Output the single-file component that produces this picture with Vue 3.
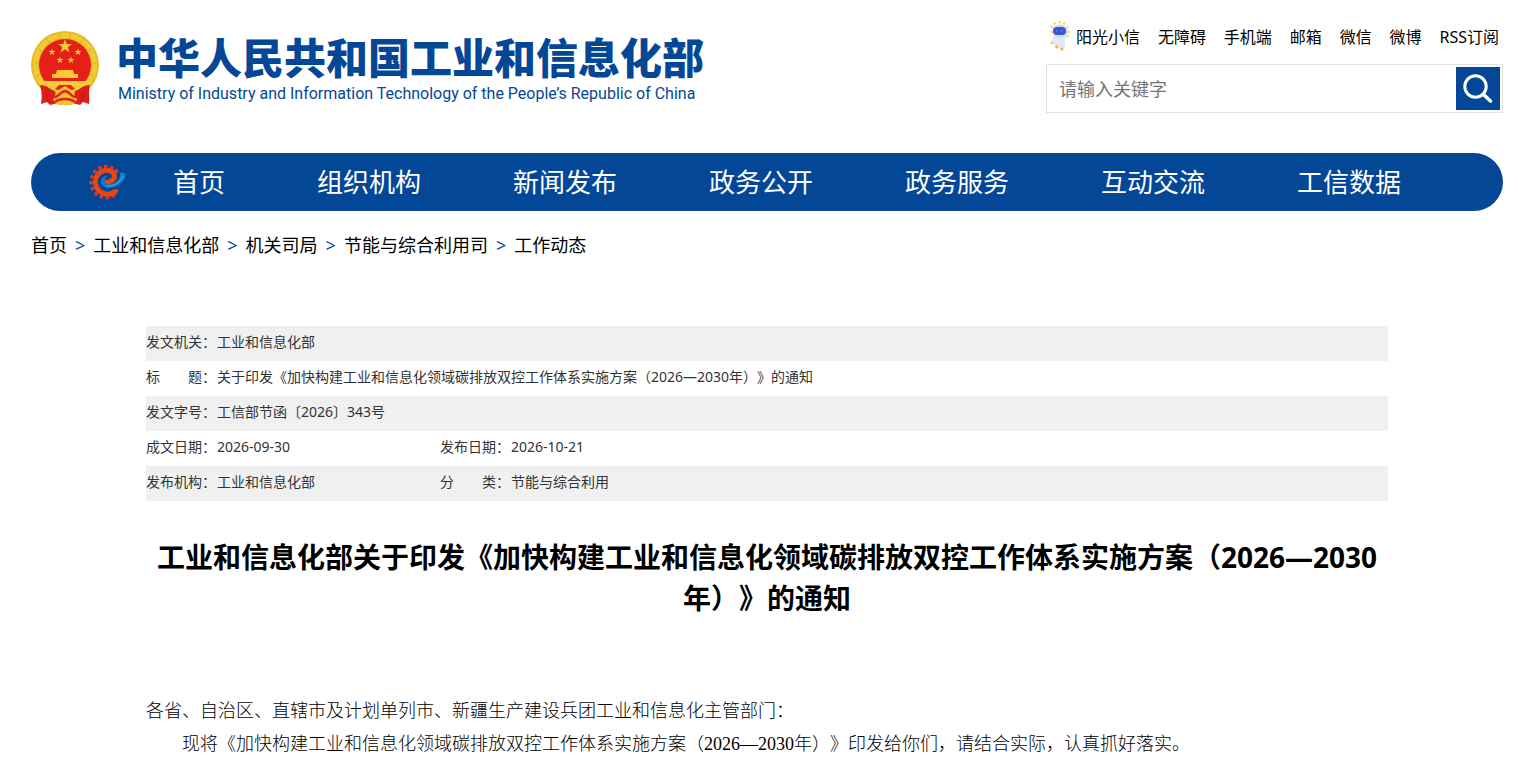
<script setup>
const topLinks = ['无障碍', '手机端', '邮箱', '微信', '微博', 'RSS订阅']
const navItems = ['首页', '组织机构', '新闻发布', '政务公开', '政务服务', '互动交流', '工信数据']
const crumbs = ['首页', '工业和信息化部', '机关司局', '节能与综合利用司', '工作动态']
const gearTeeth = Array.from({ length: 12 }, (_, i) => {
  const a = ((45 + i * 23) * Math.PI) / 180
  return { x: 17 + 15 * Math.cos(a), y: 18 - 15.5 * Math.sin(a) }
})
</script>

<template>
  <div class="page">
    <header class="header">
      <a href="#" class="brand">
        <svg class="emblem" viewBox="0 0 68 75" aria-hidden="true">
          <circle cx="34" cy="34" r="34" fill="#e6bb25" />
          <circle cx="34" cy="34" r="29.5" fill="none" stroke="#f0cb35" stroke-width="5" />
          <path d="M8 18l5 4M16 8l4 6M28 3l2 6M40 3l-2 6M52 8l-4 6M60 18l-5 4M3 32h6M65 32h-6M5 45l6-2M63 45l-6-2" stroke="#e3b726" stroke-width="1.5" />
          <circle cx="34" cy="34" r="26" fill="#e71f19" />
          <g fill="#f5cc35">
            <path d="M34 8l1.700 5.100h5.300l-4.200 3.200 1.600 5.200-4.400-3.200-4.400 3.200 1.600-5.200-4.200-3.200h5.300z" />
            <path id="star" d="M21 17.500l.9 2.500h2.600l-2.100 1.600.8 2.600-2.200-1.600-2.200 1.600.8-2.600-2.100-1.600h2.600z" />
            <use href="#star" x="26" />
            <use href="#star" x="8" y="8" />
            <use href="#star" x="19" y="8" />
            <path d="M26 39h16l1 4h4v4H21v-4h4z" />
            <path d="M13 50h42l-3 6-7 3-5-5H28l-5 5-7-3z" />
          </g>
          <path d="M9 54c7 0 9 4 15 6l3 12-8 2-3-3-6 2c1-6 1-13-1-19zM59 54c-7 0-9 4-15 6l-3 12 8 2 3-3 6 2c1-6-1-13 1-19z" fill="#dc1f19" />
          <path d="M26 60l8-5 8 5 4 9-5 5H27l-5-5z" fill="#f0c42c" />
          <path d="M20 65c7 4 9-5 14-5s7 9 14 5M24 71c5-4 15-4 20 0" fill="none" stroke="#dc241a" stroke-width="2.5" />
          <path d="M15 61l2 10M53 61l-2 10" stroke="#b81813" />
        </svg>
        <span class="brand-text">
          <span class="brand-cn">中华人民共和国工业和信息化部</span>
          <span class="brand-en">Ministry of Industry and Information Technology of the People’s Republic of China</span>
        </span>
      </a>

      <div class="tools">
        <div class="top-links">
          <a href="#" class="mascot-link">
            <svg class="mascot" viewBox="0 0 20 30" aria-hidden="true">
              <g fill="#f8d35a">
                <circle cx="5" cy="2.500" r="1.300" /><circle cx="9.500" cy="1.300" r="1.300" /><circle cx="14" cy="2.500" r="1.300" />
                <circle cx="2" cy="6" r="1.200" /><circle cx="17.500" cy="6" r="1.200" /><circle cx="1.500" cy="11" r="1.200" />
                <circle cx="18.500" cy="11" r="1.200" /><circle cx="18" cy="15" r="1.200" />
              </g>
              <path d="M4 14h11l2-1 1 1-3 5v6l-2 4h-3l-1-4-2 3H5l-1-6-2 1-1-2z" fill="#e0eaf6" />
              <ellipse cx="10" cy="10" rx="7.500" ry="6.500" fill="#cad9f1" />
              <rect x="3" y="6" width="13" height="8" rx="4" fill="#3a58d0" />
              <path d="M6 10h1M11 10h1" stroke="#5f86eb" stroke-width="2" />
              <circle cx="2" cy="22" r="1.300" fill="#f3c660" /><circle cx="7" cy="26" r="1.600" fill="#f2b644" /><circle cx="12" cy="28" r="1.600" fill="#f2b644" />
            </svg>
            阳光小信
          </a>
          <a v-for="link in topLinks" :key="link" href="#">{{ link }}</a>
        </div>
        <form class="search" @submit.prevent>
          <input type="text" placeholder="请输入关键字" aria-label="请输入关键字" />
          <button type="submit" aria-label="搜索">
            <svg viewBox="0 0 44 43" aria-hidden="true">
              <circle cx="19.500" cy="19.500" r="10.700" fill="none" stroke="#fff" stroke-width="3" />
              <path d="M27.500 27.500l7 6.500" stroke="#fff" stroke-width="3.600" stroke-linecap="round" />
            </svg>
          </button>
        </form>
      </div>
    </header>

    <nav class="nav">
      <svg class="gear" viewBox="0 0 37 36" aria-hidden="true">
        <circle v-for="(t, i) in gearTeeth" :key="i" :cx="t.x" :cy="t.y" r="2" fill="#d23c28" />
        <path d="M27 27C20 33 8 30 6.500 19.500 5.500 11 13 5 20 6.500c7 1.500 7 8 2 10.500-3 2-6 2-8 0" fill="none" stroke="#ea4513" stroke-width="5" />
        <path d="M27 25l3 1-4 5-3-3z" fill="#ea4513" />
        <path d="M12 18c0-4 4-7 8-6-5 1-6 6-1 8 7 1 13-4 12-11 5-2 7 2 4 7-6 8-21 12-23 2z" fill="#1878c8" />
        <path d="M17 22c7 1 14-3 17-10" fill="none" stroke="#37a0df" stroke-width="1.200" />
      </svg>
      <a v-for="item in navItems" :key="item" href="#">{{ item }}</a>
    </nav>

    <div class="crumbs">
      <template v-for="(crumb, i) in crumbs" :key="crumb">
        <span v-if="i" class="sep">&gt;</span>
        <a href="#">{{ crumb }}</a>
      </template>
    </div>

    <main class="article">
      <table class="meta">
        <tbody>
          <tr><th scope="row">发文机关：</th><td colspan="3">工业和信息化部</td></tr>
          <tr><th scope="row">标　　题：</th><td colspan="3">关于印发《加快构建工业和信息化领域碳排放双控工作体系实施方案（2026—2030年）》的通知</td></tr>
          <tr><th scope="row">发文字号：</th><td colspan="3">工信部节函〔2026〕343号</td></tr>
          <tr><th scope="row">成文日期：</th><td class="first">2026-09-30</td><th scope="row">发布日期：</th><td>2026-10-21</td></tr>
          <tr><th scope="row">发布机构：</th><td class="first">工业和信息化部</td><th scope="row">分　　类：</th><td>节能与综合利用</td></tr>
        </tbody>
      </table>
      <h1>工业和信息化部关于印发《加快构建工业和信息化领域碳排放双控工作体系实施方案（2026—2030年）》的通知</h1>
      <div class="body">
        <p>各省、自治区、直辖市及计划单列市、新疆生产建设兵团工业和信息化主管部门：</p>
        <p class="indent">现将《加快构建工业和信息化领域碳排放双控工作体系实施方案（2026—2030年）》印发给你们，请结合实际，认真抓好落实。</p>
      </div>
    </main>
  </div>
</template>

<style>
body {
  margin: 0;
  background: #fff;
}
</style>

<style scoped>
.page {
  padding: 20px 15px 8px 31px;
  font-family: "Noto Sans", "Noto Sans CJK SC", sans-serif;
  color: #000;
  text-spacing-trim: space-all;
}
a {
  color: inherit;
  text-decoration: none;
}
.header {
  display: flex;
  justify-content: space-between;
  align-items: flex-start;
}
.brand {
  display: flex;
  gap: 17px;
  padding-top: 11px;
  color: #054797;
}
.emblem {
  width: 68px;
  height: 75px;
}
.brand-text {
  display: flex;
  flex-direction: column;
  white-space: nowrap;
}
.brand-cn {
  padding-top: 4px;
  font-family: "Liberation Sans", "Noto Sans CJK SC", sans-serif;
  font-size: 42px;
  font-weight: 900;
  line-height: 50px;
}
.brand-en {
  padding-left: 2px;
  font-family: Roboto, sans-serif;
  font-size: 16px;
  line-height: 18px;
}
.tools {
  width: 457px;
}
.top-links {
  display: flex;
  justify-content: space-between;
  align-items: center;
  height: 32px;
  padding: 0 4px;
  font-size: 16px;
}
.mascot-link {
  display: flex;
  align-items: center;
  gap: 6px;
}
.mascot {
  width: 20px;
  height: 30px;
}
.search {
  display: flex;
  box-sizing: border-box;
  height: 49px;
  margin-top: 12px;
  padding: 2px;
  border: 1px solid #e3e3e3;
}
.search input {
  flex: 1;
  min-width: 0;
  padding: 0 10px;
  border: 0;
  outline: 0;
  font-family: inherit;
  font-size: 18px;
}
.search input::placeholder {
  color: #757575;
}
.search button {
  width: 44px;
  padding: 0;
  border: 0;
  background: #054797;
}
.search button svg {
  display: block;
}
.nav {
  display: flex;
  align-items: center;
  gap: 92px;
  margin-top: 40px;
  padding: 11px 0 11px 58px;
  border-radius: 29px;
  background: #054797;
  color: #fff;
  font-size: 26px;
  line-height: 36px;
  white-space: nowrap;
}
.gear {
  width: 37px;
  height: 36px;
  margin-right: -45px;
}
.crumbs {
  display: flex;
  gap: 8px;
  margin-top: 20px;
  font-size: 18px;
  line-height: 28px;
}
.sep {
  color: #054797;
}
.article {
  margin: 67px 115px 0;
}
.meta {
  width: 100%;
  border-collapse: collapse;
  font-size: 14px;
  line-height: 20px;
  color: #333;
}
.meta tr:nth-child(odd) {
  background: #f0f0f0;
}
.meta th,
.meta td {
  padding: 6px 0 9px;
  font-weight: 400;
  text-align: left;
}
.meta th {
  width: 71px;
  white-space: nowrap;
}
.meta .first {
  width: 223px;
}
h1 {
  margin: 36px 0 0;
  font-size: 28px;
  line-height: 41px;
  text-align: center;
}
.body {
  margin-top: 76px;
  font-family: "Liberation Serif", "Noto Sans CJK SC", serif;
  font-size: 18px;
  font-weight: 300;
  line-height: 33px;
}
.body p {
  margin: 0;
}
.indent {
  text-indent: 2em;
}
</style>
